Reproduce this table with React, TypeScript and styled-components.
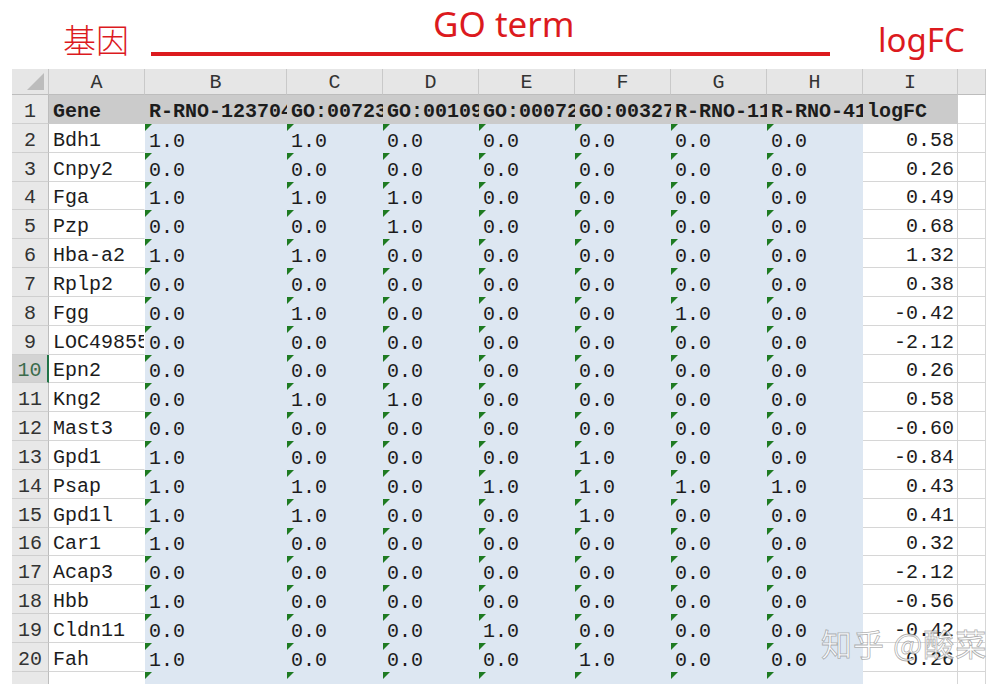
import React from 'react';
import styled, { createGlobalStyle, css } from 'styled-components';

const GlobalStyle = createGlobalStyle`
  html, body { margin: 0; padding: 0; background: #ffffff; }
  * { box-sizing: border-box; }
`;

const RED = '#dc1a1e';
const MONO = '"Liberation Mono", "DejaVu Sans Mono", monospace';

const Page = styled.div`
  position: relative;
  width: 1006px;
  height: 684px;
  overflow: hidden;
  background: #ffffff;
`;

const TitleBar = styled.div`
  display: flex;
  align-items: flex-start;
  height: 69px;
`;

const GeneLabel = styled.div`
  margin: 15px 0 0 63px;
  font-family: "Noto Sans CJK SC", sans-serif;
  font-weight: 300;
  font-size: 33px;
  line-height: normal;
  color: ${RED};
`;

const TermBlock = styled.div`
  display: flex;
  flex-direction: column;
  width: 679px;
  margin-left: 22px;
`;

const TermText = styled.div`
  height: 52px;
  padding-left: 282px;
  font-family: "Noto Sans", "Open Sans", sans-serif;
  font-size: 35px;
  line-height: normal;
  color: ${RED};
`;

const TermLine = styled.div`
  height: 4px;
  background: ${RED};
`;

const FcLabel = styled.div`
  margin: 17px 0 0 48px;
  font-family: "Noto Sans", "Open Sans", sans-serif;
  font-size: 33px;
  line-height: normal;
  color: ${RED};
`;

const Sheet = styled.div`
  display: grid;
  margin-left: 12px;
  grid-template-columns: 37px 96px 142px 96px 96px 96px 96px 96px 96px 95px 28px;
  grid-template-rows: 26px 29px repeat(20, 28.83px);
  font-family: ${MONO};
  font-size: 20px;
  line-height: normal;
  color: #1c1c1c;
`;

const Corner = styled.div`
  position: relative;
  background: #e6e6e6;
  border-right: 1px solid #c6c6c6;
  border-bottom: 1px solid #bdbdbd;
  &::after {
    content: '';
    position: absolute;
    right: 4px;
    bottom: 4px;
    width: 0;
    height: 0;
    border-left: 17px solid transparent;
    border-bottom: 17px solid #bcbcbc;
  }
`;

const ColHead = styled.div`
  display: flex;
  align-items: flex-end;
  justify-content: center;
  background: #e6e6e6;
  border-right: 1px solid #c9c9c9;
  border-bottom: 1px solid #bdbdbd;
  color: #333;
`;

const RowHead = styled.div<{ $active?: boolean }>`
  display: flex;
  align-items: flex-end;
  justify-content: center;
  background: ${p => (p.$active ? '#d3d3d3' : '#e8e8e8')};
  border-bottom: 1px solid #cfcfcf;
  border-right: ${p => (p.$active ? '2px solid #217346' : '1px solid #bdbdbd')};
  color: ${p => (p.$active ? '#3b6b4c' : '#333')};
`;

type Kind = 'text' | 'head' | 'fill' | 'num' | 'blank';

const kindStyles: Record<Kind, ReturnType<typeof css>> = {
  text: css`
    background: #ffffff;
    border-bottom: 1px solid #d6d6d6;
    border-right: 1px solid #ffffff;
  `,
  head: css`
    background: #cbcbcb;
    font-weight: bold;
    border-bottom: 1px solid #cbcbcb;
  `,
  fill: css`
    background: #dde7f2;
  `,
  num: css`
    background: #ffffff;
    justify-content: flex-end;
    border-bottom: 1px solid #d6d6d6;
    border-right: 1px solid #d6d6d6;
  `,
  blank: css`
    background: #ffffff;
    border-bottom: 1px solid #d6d6d6;
    border-right: 1px solid #d6d6d6;
  `,
};

const Cell = styled.div<{ $kind: Kind; $flag?: boolean }>`
  position: relative;
  display: flex;
  align-items: flex-end;
  padding: 0 3px 0 4px;
  overflow: hidden;
  white-space: nowrap;
  ${p => kindStyles[p.$kind]}
  ${p =>
    p.$flag &&
    css`
      &::before {
        content: '';
        position: absolute;
        top: 0;
        left: 0;
        width: 0;
        height: 0;
        border-top: 7px solid #1e7b22;
        border-right: 7px solid transparent;
      }
    `}
`;

const Watermark = styled.div`
  position: absolute;
  left: 821px;
  top: 620px;
  font-family: "Noto Sans CJK SC", sans-serif;
  font-size: 31px;
  line-height: normal;
  letter-spacing: 1px;
  color: rgba(255, 255, 255, 0.8);
  -webkit-text-stroke: 0.8px rgba(110, 110, 110, 0.55);
  white-space: nowrap;
  pointer-events: none;
`;

const letters = ['A', 'B', 'C', 'D', 'E', 'F', 'G', 'H', 'I', ''];
const headers = [
  'R-RNO-1237044',
  'GO:0072378',
  'GO:0010951',
  'GO:0007229',
  'GO:0032700',
  'R-RNO-114608',
  'R-RNO-416476',
];

const rows: [string, number[], string][] = [
  ['Bdh1', [1, 1, 0, 0, 0, 0, 0], '0.58'],
  ['Cnpy2', [0, 0, 0, 0, 0, 0, 0], '0.26'],
  ['Fga', [1, 1, 1, 0, 0, 0, 0], '0.49'],
  ['Pzp', [0, 0, 1, 0, 0, 0, 0], '0.68'],
  ['Hba-a2', [1, 1, 0, 0, 0, 0, 0], '1.32'],
  ['Rplp2', [0, 0, 0, 0, 0, 0, 0], '0.38'],
  ['Fgg', [0, 1, 0, 0, 0, 1, 0], '-0.42'],
  ['LOC498555', [0, 0, 0, 0, 0, 0, 0], '-2.12'],
  ['Epn2', [0, 0, 0, 0, 0, 0, 0], '0.26'],
  ['Kng2', [0, 1, 1, 0, 0, 0, 0], '0.58'],
  ['Mast3', [0, 0, 0, 0, 0, 0, 0], '-0.60'],
  ['Gpd1', [1, 0, 0, 0, 1, 0, 0], '-0.84'],
  ['Psap', [1, 1, 0, 1, 1, 1, 1], '0.43'],
  ['Gpd1l', [1, 1, 0, 0, 1, 0, 0], '0.41'],
  ['Car1', [1, 0, 0, 0, 0, 0, 0], '0.32'],
  ['Acap3', [0, 0, 0, 0, 0, 0, 0], '-2.12'],
  ['Hbb', [1, 0, 0, 0, 0, 0, 0], '-0.56'],
  ['Cldn11', [0, 0, 0, 1, 0, 0, 0], '-0.42'],
  ['Fah', [1, 0, 0, 0, 1, 0, 0], '0.26'],
];

export default function App() {
  return (
    <Page>
      <GlobalStyle />
      <TitleBar>
        <GeneLabel>基因</GeneLabel>
        <TermBlock>
          <TermText>GO term</TermText>
          <TermLine />
        </TermBlock>
        <FcLabel>logFC</FcLabel>
      </TitleBar>
      <Sheet>
        <Corner />
        {letters.map((l, i) => (
          <ColHead key={'h' + i}>{l}</ColHead>
        ))}

        <RowHead>1</RowHead>
        <Cell $kind="head">Gene</Cell>
        {headers.map(h => (
          <Cell key={h} $kind="head">
            {h}
          </Cell>
        ))}
        <Cell $kind="head">logFC</Cell>
        <Cell $kind="blank" />

        {rows.map(([gene, vals, fc], r) => (
          <React.Fragment key={gene}>
            <RowHead $active={r + 2 === 10}>{r + 2}</RowHead>
            <Cell $kind="text">{gene}</Cell>
            {vals.map((v, c) => (
              <Cell key={c} $kind="fill" $flag>
                {v.toFixed(1)}
              </Cell>
            ))}
            <Cell $kind="num">{fc}</Cell>
            <Cell $kind="blank" />
          </React.Fragment>
        ))}

        <RowHead />
        <Cell $kind="text" />
        {[0, 1, 2, 3, 4, 5, 6].map(c => (
          <Cell key={'e' + c} $kind="fill" $flag />
        ))}
        <Cell $kind="num" />
        <Cell $kind="blank" />
      </Sheet>
      <Watermark>知乎 @酸菜</Watermark>
    </Page>
  );
}
